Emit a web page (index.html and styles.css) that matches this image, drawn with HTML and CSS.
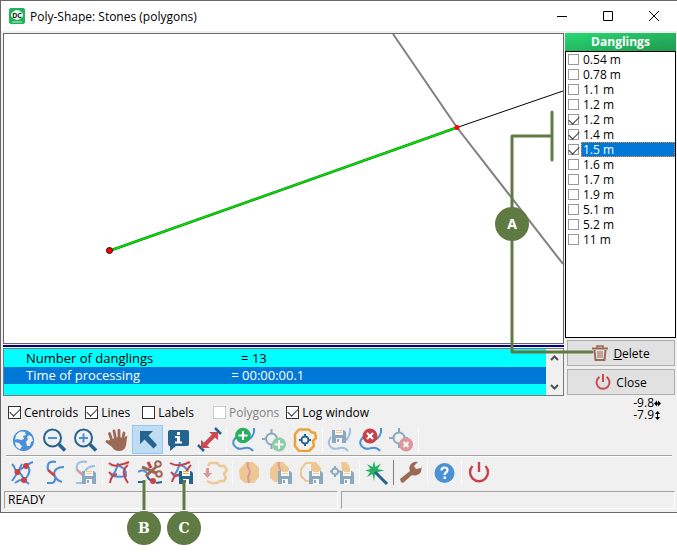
FILE: index.html
```html
<!DOCTYPE html>
<html lang="en">
<head>
<meta charset="utf-8">
<title>Poly-Shape: Stones (polygons)</title>
<link rel="stylesheet" href="styles.css">
</head>
<body>
<svg class="defs" aria-hidden="true">
  <defs>
    <symbol id="floppy" viewBox="0 0 14 13">
      <path fill="currentColor" d="M0 0h3v5h8V0h1l2 2v11H0z"/>
      <path fill="#fff" d="M3 0h8v5H3z"/>
      <path fill="#eda93b" d="M4 0h6v1H4zM4 2h6v1H4z"/>
      <path fill="#fff" d="M4 8h6v5H4z"/>
      <path fill="currentColor" d="M5 9h2v3H5z"/>
    </symbol>
  </defs>
</svg>
<div class="stage">
  <div class="window">
    <header class="titlebar">
      <svg class="app-icon" viewBox="0 0 16 16" aria-hidden="true">
        <rect width="16" height="16" rx="2" fill="#1fb25a"/>
        <circle cx="8" cy="7" r="5" fill="#e9f8ee"/><circle cx="5" cy="7" r="3" fill="#e9f8ee"/><circle cx="11" cy="7" r="3" fill="#e9f8ee"/>
        <path d="M3 14h10" stroke="#bde8cb"/>
        <text x="8" y="10" text-anchor="middle" class="app-letters">DC</text>
      </svg>
      <h1 class="title">Poly-Shape: Stones (polygons)</h1>
      <button class="caption" aria-label="Minimize"><svg viewBox="0 0 12 12"><path d="M1 6.500h10"/></svg></button>
      <button class="caption" aria-label="Maximize"><svg viewBox="0 0 12 12"><path d="M1.500 1.500h9v9h-9z"/></svg></button>
      <button class="caption" aria-label="Close window"><svg viewBox="0 0 12 12"><path d="M1 1l10 10M11 1L1 11"/></svg></button>
    </header>

    <main class="workspace">
      <section class="left">
        <div class="canvas">
          <svg class="drawing" viewBox="0 0 559 309" preserveAspectRatio="xMidYMid slice">
            <path d="M389 0L453 93.500L559 230" fill="none" stroke="#808080" stroke-width="2"/>
            <path d="M453 93.500L559 57" stroke="#000"/>
            <path d="M105 217L453 93.500" stroke="#087a08" stroke-width="2.600"/>
            <path d="M105 217L453 93.500" stroke="#00e800" stroke-width="1.400"/>
            <circle cx="453" cy="93.500" r="2.500" fill="#f00"/>
            <circle cx="105.500" cy="216.500" r="3" fill="#f00" stroke="#300"/>
          </svg>
        </div>
        <div class="splitter"></div>
        <div class="log">
          <div class="log-lines">
            <p class="log-line">Number of danglings                          = 13</p>
            <p class="log-line selected">Time of processing                           = 00:00:00.1</p>
          </div>
          <div class="scroll">
            <button aria-label="Scroll up"><svg viewBox="0 0 9 6"><path d="M1 5l3.500-3.500L8 5"/></svg></button>
            <button aria-label="Scroll down"><svg viewBox="0 0 9 6"><path d="M1 1l3.500 3.500L8 1"/></svg></button>
          </div>
        </div>
      </section>
      <aside class="right">
        <h2 class="list-head">Danglings</h2>
        <div class="list">
          <label class="item"><input type="checkbox"><span>0.54 m</span></label>
          <label class="item"><input type="checkbox"><span>0.78 m</span></label>
          <label class="item"><input type="checkbox"><span>1.1 m</span></label>
          <label class="item"><input type="checkbox"><span>1.2 m</span></label>
          <label class="item"><input type="checkbox" checked><span>1.2 m</span></label>
          <label class="item"><input type="checkbox" checked><span>1.4 m</span></label>
          <label class="item current"><input type="checkbox" checked><span>1.5 m</span></label>
          <label class="item"><input type="checkbox"><span>1.6 m</span></label>
          <label class="item"><input type="checkbox"><span>1.7 m</span></label>
          <label class="item"><input type="checkbox"><span>1.9 m</span></label>
          <label class="item"><input type="checkbox"><span>5.1 m</span></label>
          <label class="item"><input type="checkbox"><span>5.2 m</span></label>
          <label class="item"><input type="checkbox"><span>11 m</span></label>
        </div>
        <button class="action">
          <svg viewBox="0 0 16 16" fill="none" stroke="#9b6a55"><path d="M0 3.500h16" stroke-width="2"/><path d="M5 3V1h6v2" stroke-width="1.500"/><path d="M2.500 5l1 10h9l1-10" stroke-width="2"/><path d="M6 6v7M8 6v7M10 6v7"/></svg>
          <span><u>D</u>elete</span>
        </button>
        <button class="action">
          <svg viewBox="0 0 16 16" fill="none" stroke="#cb4a50" stroke-width="2"><path d="M4.500 2.800A6.500 6.500 0 1 0 11.500 2.800M8 0v8"/></svg>
          <span>Close</span>
        </button>
      </aside>
    </main>

    <div class="options">
      <label class="option"><input type="checkbox" checked>Centroids</label>
      <label class="option"><input type="checkbox" checked>Lines</label>
      <label class="option labels"><input type="checkbox">Labels</label>
      <label class="option polygons"><input type="checkbox" disabled>Polygons</label>
      <label class="option"><input type="checkbox" checked>Log window</label>
      <div class="coords">
        <span>-9.8<svg viewBox="0 0 7 9"><path d="M0 4.500L3 1.500v2h1v-2l3 3-3 3v-2H3v2z"/></svg></span>
        <span>-7.9<svg viewBox="0 0 7 9"><path d="M3.500 0L6 3H4v3h2L3.500 9 1 6h2V3H1z"/></svg></span>
      </div>
    </div>

    <div class="toolbar" role="toolbar" aria-label="View and edit">
      <button class="tool" aria-label="Full view"><svg viewBox="0 0 25 25"><circle cx="12.500" cy="13.500" r="10.500" fill="#4a90d6"/><path fill="#f0f0f0" d="M9 4l5 1 1 3-3 1 1 3-3 1-4-1-2 1 1-5zM18 8l3 2 1 4-2 1-1 4-3 0-1-4 2-3-1-2zM4 15l4 1 3 3-2 4-4-3z"/><circle cx="12.500" cy="13.500" r="10" fill="none" stroke="#4a90d6"/></svg></button>
      <button class="tool" aria-label="Zoom out"><svg viewBox="0 0 25 25" fill="none"><circle cx="10.500" cy="11" r="8.500" stroke="#266490" stroke-width="2"/><path d="M17 17.500l6 6" stroke="#266490" stroke-width="3.500"/><path d="M6 11h9" stroke="#4a90d6" stroke-width="2"/></svg></button>
      <button class="tool" aria-label="Zoom in"><svg viewBox="0 0 25 25" fill="none"><circle cx="10.500" cy="11" r="8.500" stroke="#266490" stroke-width="2"/><path d="M17 17.500l6 6" stroke="#266490" stroke-width="3.500"/><path d="M6 11h9M10.500 6.500v9" stroke="#4a90d6" stroke-width="2"/></svg></button>
      <button class="tool" aria-label="Pan"><svg viewBox="0 0 25 25" fill="none" stroke="#9b6a55" stroke-linecap="round"><path d="M8 14L5.500 6.500M11.500 12L10 4M15 12V3.500M18.500 13l1.500-7M8 18l-5-3.500" stroke-width="2.800"/><path fill="#9b6a55" stroke="none" d="M6 13l8-3 6 1 2-2q2-.5 1 2l-1 7q-1 6-7 6-5 0-7-4l-5-6z"/></svg></button>
      <button class="tool active" aria-label="Select" aria-pressed="true"><svg viewBox="0 0 25 25" fill="#266490"><path d="M5 4h13l-4.500 4.500L22 18l-3.500 3.500L9.500 12.500 5 17z"/></svg></button>
      <button class="tool" aria-label="Information"><svg viewBox="0 0 25 25"><path fill="#266490" d="M4 3h17q2 0 2 2v12q0 2-2 2H10l-6 5v-5q-2 0-2-2V5q0-2 2-2z"/><path fill="#fff" d="M11 5h3v3h-3zM9 9h5v5.500h2v2H9v-2h2V11H9z"/></svg></button>
      <button class="tool" aria-label="Measure"><svg viewBox="0 0 25 25"><path d="M1 18l6 6M18 1l6 6" stroke="#266490" stroke-width="2.500"/><path fill="#cb4a50" d="M4 21v-8l3 2.500 8-8L12 5h9v8l-3-2.500-8 8 3 2.500z"/></svg></button>
      <i class="sep"></i>
      <button class="tool" aria-label="Add line"><svg viewBox="0 0 25 25" fill="none"><path d="M5 10Q-1 17 6 21q3 1.500 8 0 5-1 8 3M23 1q1 8-6 12" stroke="#4a90d6" stroke-width="2"/><circle cx="12" cy="8.500" r="7.800" fill="#27ae60"/><path d="M12 4v9M7.500 8.500h9" stroke="#fff" stroke-width="2"/></svg></button>
      <button class="tool" aria-label="Add centroid" disabled><svg viewBox="0 0 25 25" fill="none"><circle cx="9.500" cy="12" r="5.500" stroke="#266490" stroke-width="2"/><path d="M9.500 2v5M0 12h5M9.500 17v5M14 12h3" stroke="#266490" stroke-width="2"/><circle cx="17" cy="17.500" r="7" fill="#27ae60"/><path d="M17 13v9M12.500 17.500h9" stroke="#fff" stroke-width="2"/></svg></button>
      <button class="tool" aria-label="Polygon centroid"><svg viewBox="0 0 25 25" fill="none"><path d="M6 2.500h10l2 2.500 4 1 1 5-3 3 1 5-5 5H6l-4-5V7z" stroke="#eba23a" stroke-width="2.500" stroke-linejoin="round"/><circle cx="12" cy="13" r="3.500" stroke="#266490" stroke-width="2"/><path d="M12 7v3M12 16v3M6 13h3M15 13h3" stroke="#266490" stroke-width="2"/></svg></button>
      <i class="sep"></i>
      <button class="tool" aria-label="Save line" disabled><svg viewBox="0 0 25 25" fill="none"><path d="M4 10Q-1 17 5 21q3 1.500 8 0 5-1 8 3M23 1q1 8-6 14" stroke="#4a90d6" stroke-width="2"/><use href="#floppy" x="5" y="3" width="14" height="13"/></svg></button>
      <button class="tool" aria-label="Delete line"><svg viewBox="0 0 25 25" fill="none"><path d="M5 10Q-1 17 6 21q3 1.500 8 0 5-1 8 3M23 1q1 8-6 12" stroke="#4a90d6" stroke-width="2"/><circle cx="12" cy="9" r="7.500" fill="#c9404a"/><path d="M9 6l6 6M15 6l-6 6" stroke="#fff" stroke-width="2.200"/></svg></button>
      <button class="tool" aria-label="Delete centroid" disabled><svg viewBox="0 0 25 25" fill="none"><circle cx="10" cy="11" r="5.500" stroke="#266490" stroke-width="2"/><path d="M10 1v5M0 11h5M10 16v5M15 11h4" stroke="#266490" stroke-width="2"/><circle cx="17" cy="17.500" r="7" fill="#c9404a"/><path d="M14.500 15l5 5M19.500 15l-5 5" stroke="#fff" stroke-width="2.200"/></svg></button>
      <i class="sep"></i>
    </div>
    <hr class="rule">
    <div class="toolbar" role="toolbar" aria-label="Topology">
      <button class="tool" aria-label="Show nodes"><svg viewBox="0 0 25 25" fill="none"><path d="M1 4q2 2 3 5 1 3 3 3M1 21l6-9 4-8M7 12q4 2 6 8M7 11l9-6M15 5l7-3M16 5q6 7-3 15M4 23q5-4 9-3l5 4" stroke="#4a90d6" stroke-width="2"/><g fill="#c9404a"><circle cx="6.500" cy="12" r="3"/><circle cx="15" cy="6" r="3"/><circle cx="13" cy="20" r="3"/></g></svg></button>
      <button class="tool" aria-label="Find danglings"><svg viewBox="0 0 25 25" fill="none"><path d="M14 2Q4 0 6 10M22 7q-10 0-10 8M5 23h5q4-1 3-7 1 4 7 6" stroke="#4a90d6" stroke-width="2.200"/><path d="M6 10l7 6" stroke="#c9404a" stroke-width="2.500"/></svg></button>
      <button class="tool" aria-label="Save danglings" disabled><svg viewBox="0 0 25 25" fill="none"><path d="M14 2Q2 0 4 10M22 6q-9 0-11 8M3 23h6q3-1 3-7" stroke="#4a90d6" stroke-width="2.200"/><path d="M4 10l7 6" stroke="#c9404a" stroke-width="2.500"/><use href="#floppy" x="9" y="11" width="14" height="13"/></svg></button>
      <i class="sep"></i>
      <button class="tool" aria-label="Find crossings"><svg viewBox="0 0 25 25" fill="none"><path d="M11 3q-2 10-7 13M10 5q10 3 9 11-8 2-15-1" stroke="#4a90d6" stroke-width="2"/><path d="M2 3q4 4 10 2 6-1 10-3M21 5q-5 4-4 9t4 9M3 23q1-8 7-9M2 12l3 3" stroke="#c9404a" stroke-width="2"/></svg></button>
      <button class="tool" aria-label="Cut danglings"><svg viewBox="0 0 25 25" fill="none"><path d="M0 22h7M18 23l6-1M9 15q1 5 6 6" stroke="#266490" stroke-width="2"/><path d="M0 12q7-4 10 3" stroke="#4a90d6" stroke-width="2"/><path d="M10 2l3 6" stroke="#c9404a" stroke-width="3"/><circle cx="15" cy="21" r="3" fill="#c9404a"/><path d="M4 7l14 6M8 16l11-10" stroke="#9b6a55" stroke-width="3"/><circle cx="20" cy="4" r="2.800" stroke="#9b6a55" stroke-width="2"/><circle cx="21" cy="14" r="2.800" stroke="#9b6a55" stroke-width="2"/></svg></button>
      <button class="tool" aria-label="Save cut lines"><svg viewBox="0 0 25 25" fill="none"><path d="M11 2Q9 12 4 16M10 5q8 1 8 7M4 14q4 3 8 1" stroke="#4a90d6" stroke-width="2"/><path d="M1 3q5 3 11 2 5-1 9-3M22 5q-4 4-4 7M3 22q1-7 9-8M2 12l3 3" stroke="#c9404a" stroke-width="2"/><use href="#floppy" x="10" y="11" width="14" height="13"/></svg></button>
      <i class="sep"></i>
      <button class="tool" aria-label="Close polygon" disabled><svg viewBox="0 0 25 25" fill="none"><path d="M5 6l2-3h7l3 3h4l3 4-3 4 2 4-2 3h-4l-3 2H8l-4-2" stroke="#eba23a" stroke-width="2.500" stroke-linejoin="round"/><path fill="#c9404a" d="M3 8h3v5h3l-4.500 5L0 13h3z"/></svg></button>
      <i class="sep"></i>
      <button class="tool" aria-label="Show boundary" disabled><svg viewBox="0 0 25 25"><path fill="#eba23a" d="M9 2h7l6 6v9l-5 6H8l-5-4-1-9z"/><path d="M11 2q-1 4 1 7t-1 8l1 6" fill="none" stroke="#c9404a" stroke-width="2"/></svg></button>
      <button class="tool" aria-label="Save boundary" disabled><svg viewBox="0 0 25 25"><path fill="#eba23a" d="M8 2h7l6 6v9l-5 5H7l-5-4V9z"/><path d="M11 2q-1 4 1 7t-1 8l1 4" fill="none" stroke="#c9404a" stroke-width="2"/><use href="#floppy" x="10" y="11" width="14" height="13"/></svg></button>
      <button class="tool" aria-label="Save polygon" disabled><svg viewBox="0 0 25 25"><path fill="none" stroke="#eba23a" stroke-width="2" d="M13 3H7L2 9v7l5 5h4"/><path fill="#eba23a" d="M12 2h5l5 6v6H12z"/><use href="#floppy" x="10" y="11" width="14" height="13"/></svg></button>
      <button class="tool" aria-label="Save centroids" disabled><svg viewBox="0 0 25 25"><path fill="#eba23a" d="M11 2h5q4 3 4 9h-8z"/><path d="M5 6v3M5 14v3M0 11.500h2M8 11.500h3" stroke="#266490" stroke-width="2"/><circle cx="5" cy="11.500" r="3" fill="none" stroke="#266490" stroke-width="1.800"/><use href="#floppy" x="10" y="11" width="14" height="13"/></svg></button>
      <i class="sep"></i>
      <button class="tool" aria-label="Automatic repair"><svg viewBox="0 0 25 25"><path d="M10 1l1.500 6L17 3.500 13.500 9l7 1.500-7 1.500L16 17l-5-3-1 7-1.500-7L3 17l3-5-5-1.500L6.500 9 3 4l5.500 3z" fill="#27ae60"/><path d="M11 12l12 12" stroke="#266490" stroke-width="3"/></svg></button>
      <i class="sep dark"></i>
      <button class="tool" aria-label="Settings"><svg viewBox="0 0 25 25" fill="#9b6a55"><path d="M2 19L12 11Q10 6 14 3q3-2 6-1l-4 4 2 3 5-1v-3q2 8-4 10-3 1-5 0L5 23 3 22z"/></svg></button>
      <i class="sep"></i>
      <button class="tool" aria-label="Help"><svg viewBox="0 0 25 25"><circle cx="12.500" cy="13" r="10" fill="#4a90d6"/><path d="M9.500 10.500q0-3 3-3t3 2.500q0 1.500-1.500 2.500T12.500 15" fill="none" stroke="#fff" stroke-width="2.200"/><path d="M11.500 16.500h2.500V19h-2.500z" fill="#fff"/></svg></button>
      <i class="sep"></i>
      <button class="tool" aria-label="Exit"><svg viewBox="0 0 25 25" fill="none" stroke="#c9404a" stroke-width="2.400"><path d="M6.500 6A9 9 0 1 0 19.500 6M13 2v10"/></svg></button>
    </div>

    <footer class="status">
      <div class="panel">READY</div>
      <div class="panel"></div>
    </footer>
  </div>

  <svg class="callout-a" viewBox="0 0 192 360">
    <path d="M67 26v48M67 50H27v216h80" fill="none" stroke="#5f7a42" stroke-width="3" stroke-linejoin="round" stroke-linecap="round"/>
    <circle cx="27" cy="138" r="17" fill="#5f7a42"/>
    <text x="27" y="143" class="letter">A</text>
  </svg>
  <svg class="callout-bc" viewBox="0 0 80 70">
    <path d="M20 5v30M60 5v30" stroke="#5f7a42" stroke-width="3"/>
    <circle cx="20" cy="53" r="17" fill="#5f7a42"/>
    <circle cx="60" cy="53" r="17" fill="#5f7a42"/>
    <text x="20" y="58" class="letter serif">B</text>
    <text x="60" y="58" class="letter serif">C</text>
  </svg>
</div>
</body>
</html>
```
FILE: styles.css
```css
* { box-sizing: border-box; }
body {
  margin: 0;
  background: #fff;
  font: 12px/15px "Open Sans", "Noto Sans", sans-serif;
  color: #000;
}
button { font: inherit; color: inherit; padding: 0; border: 0; background: none; }
h1, h2, p { margin: 0; font: inherit; }
.defs { display: none; }
.stage { position: relative; min-height: 100vh; }
.window {
  display: flex;
  flex-direction: column;
  height: calc(100vh - 41px);
  min-height: 400px;
  background: #f0f0f0;
  border: 1px solid #6b6769;
  border-right: 0;
}

.titlebar { display: flex; align-items: center; height: 30px; background: #fff; padding-left: 8px; }
.app-icon { width: 16px; height: 16px; }
.app-letters { font: bold 7px "Noto Sans", sans-serif; fill: #222; }
.title { flex: 1; margin-left: 5px; }
.caption { display: flex; justify-content: center; width: 46px; height: 30px; align-items: center; }
.caption svg { width: 12px; height: 12px; fill: none; stroke: #000; }

.workspace { display: flex; flex: 1; min-height: 0; gap: 1px; padding: 2px 1px 0 2px; }
.left { flex: 1; display: flex; flex-direction: column; min-width: 0; }
.canvas { flex: 1; min-height: 0; background: #fff; border: 1px solid #6b6769; }
.drawing { display: block; width: 100%; height: 100%; }
.splitter { height: 2px; margin: 1px 0; background: #000080; }
.log { display: flex; height: 48px; border: 1px solid #7a7a7a; }
.log-lines { flex: 1; background: #0ff; padding-top: 1px; }
.log-line { font-size: 13px; line-height: 17px; white-space: pre; padding-left: 22px; }
.log-line.selected { background: #0078d7; color: #fff; }
.scroll { width: 17px; display: flex; flex-direction: column; justify-content: space-between; background: #f0f0f0; }
.scroll button { height: 17px; display: flex; align-items: center; justify-content: center; }
.scroll svg { width: 9px; height: 6px; fill: none; stroke: #505050; stroke-width: 2; }

.right { width: 111px; display: flex; flex-direction: column; }
.list-head {
  height: 18px;
  line-height: 18px;
  text-align: center;
  font-weight: bold;
  color: #fff;
  background: linear-gradient(170deg, #27d873, #22994f);
}
.list { flex: 1; min-height: 0; background: #fff; border: 1px solid #000; margin-bottom: 2px; }
.item { display: flex; align-items: center; height: 15px; padding-left: 2px; gap: 2px; }
.item span { flex: 1; padding-left: 2px; line-height: 15px; }
.current span { background: #0078d7; color: #fff; outline: 1px dotted #ff8728; outline-offset: -1px; }
.action {
  display: flex;
  align-items: center;
  justify-content: center;
  gap: 5px;
  height: 26px;
  margin: 0 1px 3px 2px;
  background: #e1e1e1;
  border: 1px solid #adadad;
}
.action:last-child { margin-bottom: 1px; }
.action svg { width: 16px; height: 16px; }

input[type="checkbox"] {
  appearance: none;
  flex: none;
  margin: 0;
  width: 13px;
  height: 13px;
  border: 1px solid #333;
  background: #fff;
  position: relative;
}
.item input { width: 11px; height: 11px; }
.item input[type="checkbox"] { width: 11px; height: 11px; border-color: #999; }
input[type="checkbox"]:disabled { border-color: #ccc; }
input[type="checkbox"]:checked::after {
  content: "";
  position: absolute;
  left: 1px;
  top: 1px;
  width: 9px;
  height: 5px;
  border: solid #333;
  border-width: 0 0 1px 1px;
  transform: rotate(-45deg);
}
.item input[type="checkbox"]:checked::after { left: 0; top: 1px; }

.options { display: flex; align-items: center; height: 28px; padding: 4px 16px 0 7px; gap: 7px; }
.option { display: flex; align-items: center; gap: 3px; }
.option.labels { margin-left: 5px; }
.option.polygons { margin-left: 12px; color: #838383; }
.coords { margin: -6px 0 0 auto; display: flex; flex-direction: column; line-height: 12px; }
.coords span { display: flex; align-items: center; }
.coords svg { width: 7px; height: 9px; }

.toolbar { display: flex; align-items: center; height: 30px; padding: 0 7px; }
.tool { display: flex; align-items: center; justify-content: center; width: 31px; height: 29px; color: #266490; }
.tool svg { width: 25px; height: 25px; }
.tool:disabled svg { opacity: 0.5; }
.tool.active { background: #c0dcf3; border: 1px solid #90c8f6; }
.tool.active svg { flex: none; }
.sep { width: 1px; height: 25px; margin: 0 1px; background: #fafafa; }
.sep.dark { background: #808080; }
.rule { width: calc(100% - 10px); height: 2px; margin: 1px 0 0 5px; border: 0; border-top: 1px solid #a0a0a0; background: #fff; }

.status { display: flex; gap: 3px; padding: 4px 2px 3px 3px; }
.panel {
  flex: 1;
  height: 18px;
  padding-left: 3px;
  line-height: 16px;
  border: 1px solid #fff;
  border-top-color: #a0a0a0;
  border-left-color: #a0a0a0;
}

.callout-a { position: absolute; right: 0; top: 86px; width: 192px; height: 360px; pointer-events: none; }
.callout-bc { position: absolute; left: 124px; top: 475px; width: 80px; height: 70px; pointer-events: none; }
.letter { font: bold 14px "Noto Sans", sans-serif; fill: #fff; text-anchor: middle; }
.letter.serif { font-family: "DejaVu Serif", serif; }
```
